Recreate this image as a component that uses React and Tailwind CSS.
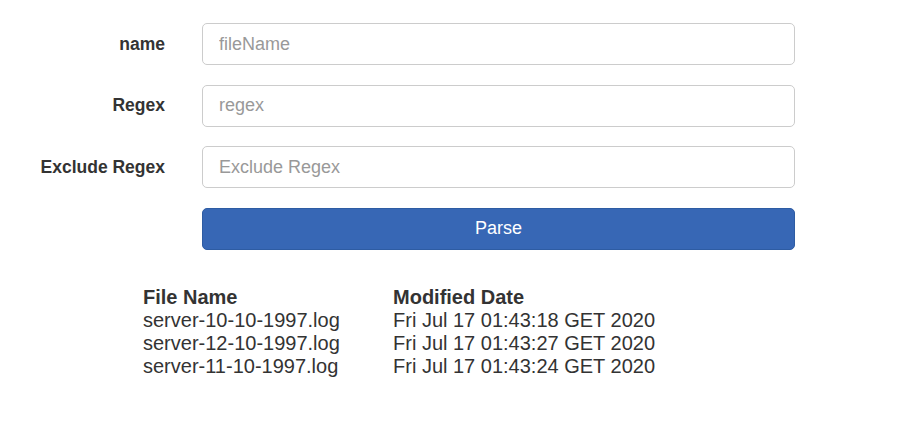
export default function App() {
  const rows = [
    ["server-10-10-1997.log", "Fri Jul 17 01:43:18 GET 2020"],
    ["server-12-10-1997.log", "Fri Jul 17 01:43:27 GET 2020"],
    ["server-11-10-1997.log", "Fri Jul 17 01:43:24 GET 2020"],
  ];
  const fields = [
    ["name", "fileName"],
    ["Regex", "regex"],
    ["Exclude Regex", "Exclude Regex"],
  ];
  return (
    <div className="w-[915px] h-[433px] bg-white text-[#333] font-['Liberation_Sans',Arial,sans-serif]">
      <div className="pt-[23px] flex flex-col gap-[19.5px]">
        {fields.map(([label, ph]) => (
          <div key={label} className="flex items-center">
            <label className="w-[165px] text-right font-bold text-[17.5px]">{label}</label>
            <input
              placeholder={ph}
              className="ml-[37px] w-[593px] h-[42px] border border-[#ccc] rounded-[5px] px-[16px] text-[18px] placeholder:text-[#999] outline-none"
            />
          </div>
        ))}
        <div className="flex">
          <button className="ml-[202px] w-[593px] h-[42px] bg-[#3767b5] border border-[#2e5ca3] rounded-[5px] text-white text-[18px]">
            Parse
          </button>
        </div>
      </div>
      <table className="ml-[143px] mt-[36px] text-[20px] leading-[23px]">
        <thead>
          <tr>
            <th className="text-left font-bold w-[250px] p-0">File Name</th>
            <th className="text-left font-bold p-0">Modified Date</th>
          </tr>
        </thead>
        <tbody>
          {rows.map(([a, b]) => (
            <tr key={a}>
              <td className="p-0">{a}</td>
              <td className="p-0">{b}</td>
            </tr>
          ))}
        </tbody>
      </table>
    </div>
  );
}
